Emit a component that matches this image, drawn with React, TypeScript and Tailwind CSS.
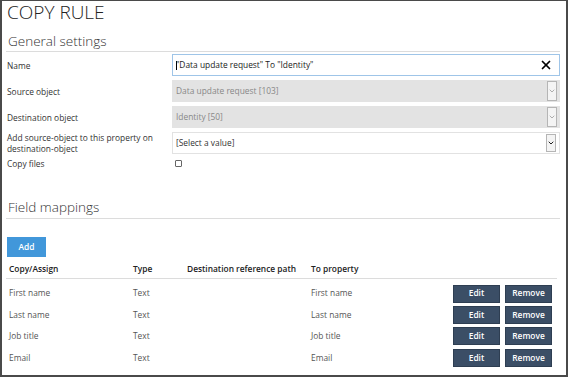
import { X, ChevronDown } from "lucide-react";

const mappings = [
  { from: "First name", type: "Text", path: "", to: "First name" },
  { from: "Last name", type: "Text", path: "", to: "Last name" },
  { from: "Job title", type: "Text", path: "", to: "Job title" },
  { from: "Email", type: "Text", path: "", to: "Email" },
];

const SelectArrow = ({ dark = false }: { dark?: boolean }) => (
  <div className="absolute right-[3px] top-[1px] bottom-[1px] w-[10px] border border-[#b5b5b5] bg-[#f4f4f4] flex items-center justify-center">
    <ChevronDown size={8} strokeWidth={dark ? 3 : 2} className={dark ? "text-[#222]" : "text-[#8a8a8a]"} />
  </div>
);

const Row = ({ label, children, className = "" }: { label: React.ReactNode; children: React.ReactNode; className?: string }) => (
  <div className={"flex items-center " + className}>
    <div className="w-[166px] pl-[1px] text-[8.4px] leading-[11px] text-[#333]">{label}</div>
    <div className="flex-1">{children}</div>
  </div>
);

export default function App() {
  return (
    <div className="w-[569px] h-[380px] bg-white" style={{ fontFamily: '"Open Sans", "Liberation Sans", sans-serif' }}>
      <div className="w-[568px] h-[377px] border-t border-l-2 border-r-2 border-b-2 border-[#4a4a4a] pl-[4px] pr-[6px]">
        <h1 className="text-[19px] font-light leading-[22px] text-[#222] pl-[1px]">COPY RULE</h1>

        <div className="mt-[10px] border-b border-[#dcdcdc] pb-[2px]">
          <h2 className="text-[13.5px] font-light leading-[16px] text-[#333] pl-[2px]">General settings</h2>
        </div>

        <div className="mt-[2px] flex flex-col gap-[4px]">
          <Row label="Name">
            <div className="relative h-[22px] border border-[#9fc5e8] bg-white flex items-center pl-[3px] text-[8.4px] text-[#222]">
              <span className="w-px h-[9px] bg-black -mr-px" />
              <span>"Data update request" To "Identity"</span>
              <X size={14} strokeWidth={3} className="absolute right-[6px] text-black" />
            </div>
          </Row>
          <Row label="Source object">
            <div className="relative h-[22px] bg-[#e3e3e3] flex items-center pl-[4px] text-[8.4px] text-[#888]">
              Data update request [103]
              <SelectArrow />
            </div>
          </Row>
          <Row label="Destination object">
            <div className="relative h-[22px] bg-[#e3e3e3] flex items-center pl-[4px] text-[8.4px] text-[#888]">
              Identity [50]
              <SelectArrow />
            </div>
          </Row>
          <Row label={<>Add source-object to this property on<br />destination-object</>}>
            <div className="relative h-[22px] border border-[#e2e2e2] bg-white flex items-center pl-[3px] text-[8.4px] text-[#333]">
              [Select a value]
              <SelectArrow dark />
            </div>
          </Row>
          <Row label="Copy files" className="items-start">
            <div className="pl-[3px] pt-[2px]">
              <div className="w-[7px] h-[7px] border border-[#666] rounded-[1px] bg-white" />
            </div>
          </Row>
        </div>

        <div className="mt-[30px] border-b border-[#dcdcdc] pb-[2px]">
          <h2 className="text-[13.5px] font-light leading-[17px] text-[#333] pl-[2px]">Field mappings</h2>
        </div>

        <button className="mt-[18px] ml-[1px] w-[39px] h-[20px] bg-[#4197da] text-white text-[8.4px] font-semibold">
          Add
        </button>

        <table className="mt-[4px] w-[551px] text-[8.4px] text-left">
          <thead>
            <tr className="border-b border-[#dcdcdc] text-[#222]">
              <th className="h-[17px] pl-[3px] w-[127px] font-semibold">Copy/Assign</th>
              <th className="w-[54px] font-semibold">Type</th>
              <th className="w-[124px] font-semibold">Destination reference path</th>
              <th className="font-semibold">To property</th>
              <th className="w-[104px]" />
            </tr>
          </thead>
          <tbody className="text-[#555]">
            <tr className="h-[5px]" />
            {mappings.map((m) => (
              <tr key={m.from} className="h-[21.4px]">
                <td className="pl-[3px]">{m.from}</td>
                <td>{m.type}</td>
                <td>{m.path}</td>
                <td>{m.to}</td>
                <td>
                  <div className="flex gap-[5px]">
                    <button className="w-[47px] h-[18px] bg-[#3b4e66] border border-[#2e3e52] text-white font-semibold">Edit</button>
                    <button className="w-[47px] h-[18px] bg-[#3b4e66] border border-[#2e3e52] text-white font-semibold">Remove</button>
                  </div>
                </td>
              </tr>
            ))}
          </tbody>
        </table>
      </div>
    </div>
  );
}
